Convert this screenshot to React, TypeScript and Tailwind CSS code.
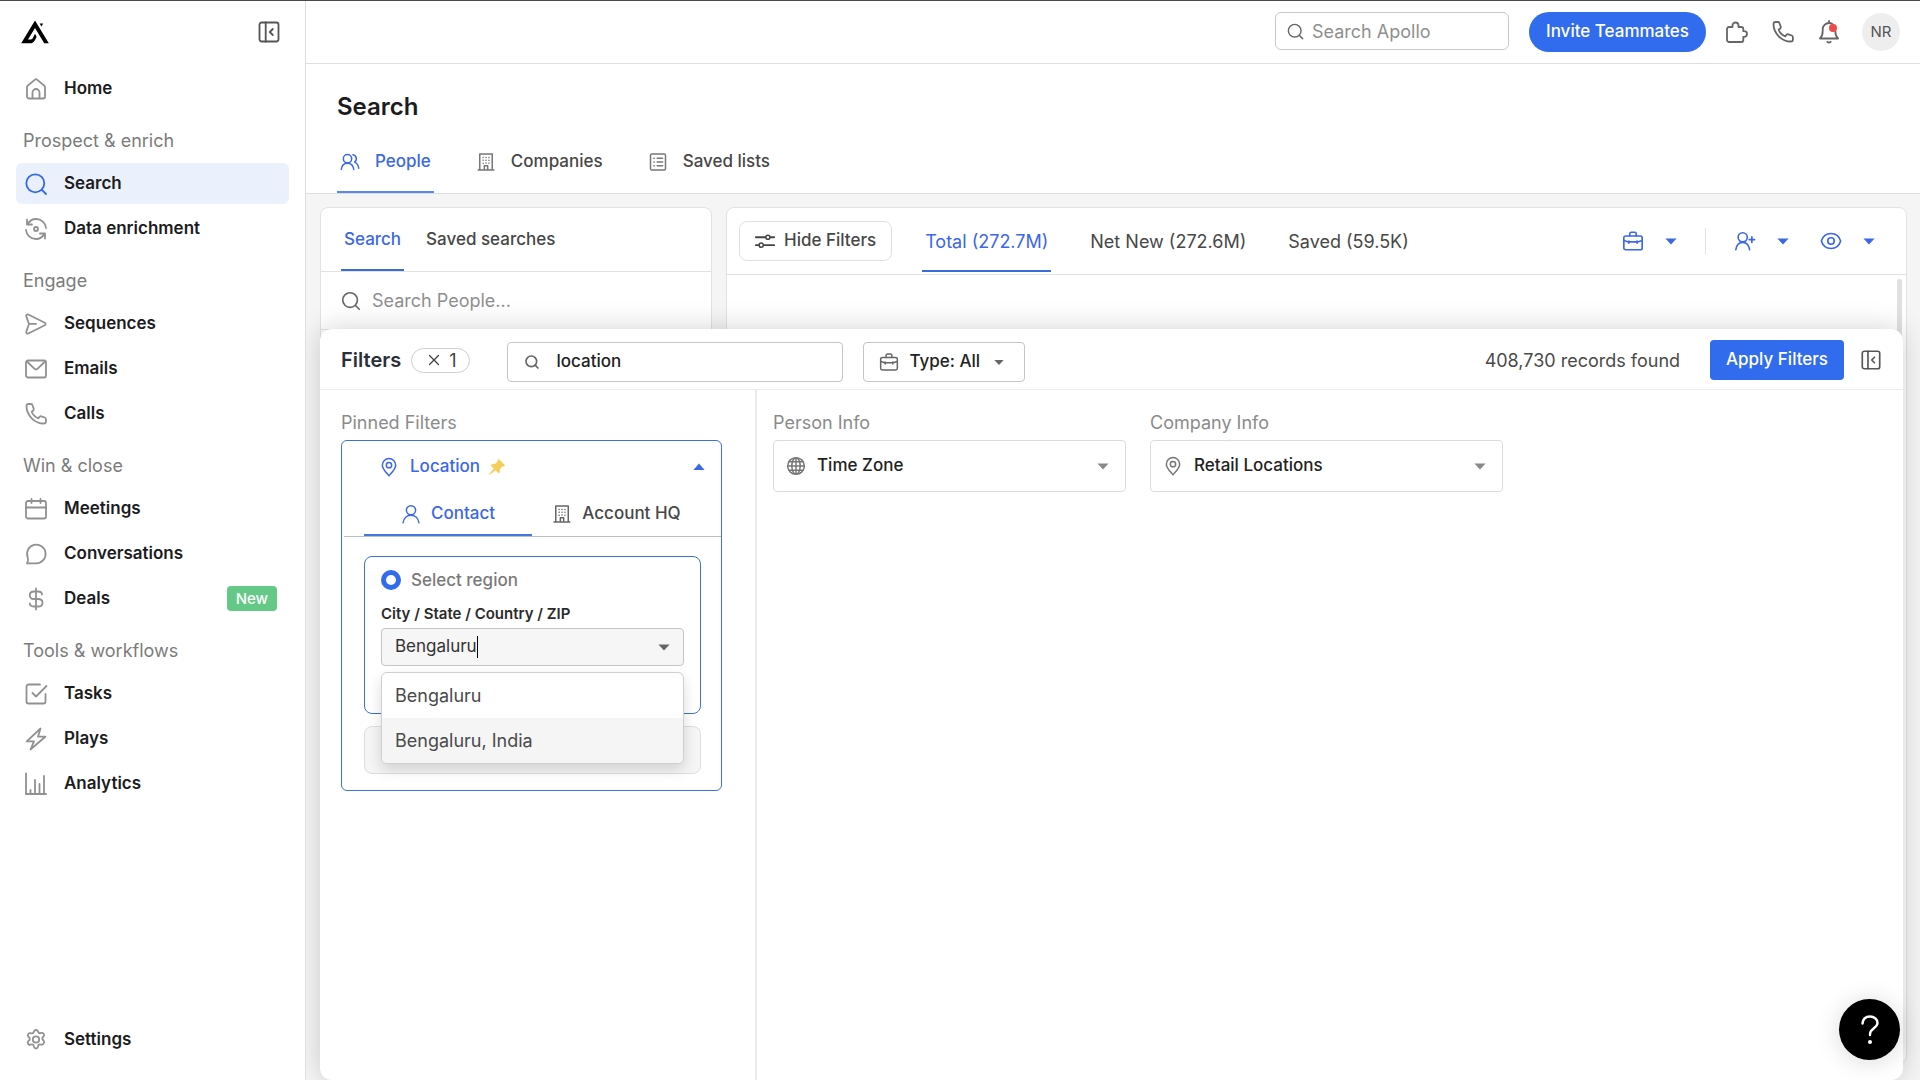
import React, { useState } from 'react';
import { Search as SearchIcon, X } from 'lucide-react';

interface IconProps {
  className?: string;
  children: React.ReactNode;
}

const Icon: React.FC<IconProps> = ({ className = 'w-6 h-6', children }) => (
  <svg
    viewBox="0 0 24 24"
    fill="none"
    stroke="currentColor"
    strokeWidth="1.8"
    strokeLinecap="round"
    strokeLinejoin="round"
    aria-hidden="true"
    className={`shrink-0 ${className}`}
  >
    {children}
  </svg>
);

const Logo = () => (
  <svg viewBox="0 0 28 24" className="w-7 h-6" fill="#000" aria-hidden="true">
    <path d="M14 0.5 27.8 23.3h-4.6L14 8 7 19.6h1.6c1.6 0 2.6-.5 3.4-1.9l2-4 1.6 3-1.4 3c-1.2 2.5-2.8 3.6-5.6 3.6H0.2z" />
    <path d="M18.6 3.4h3.6l-1.8 3z" />
  </svg>
);

const PanelIcon = ({ className }: { className?: string }) => (
  <Icon className={className}>
    <rect x="2.5" y="2.5" width="19" height="19" rx="2.2" />
    <path d="M8.7 2.5v19M15.8 9l-3 3 3 3" />
  </Icon>
);

const phonePath = (
  <path d="M2.5 4.1C2.5 3 3.4 2 4.6 2h2.2c.8 0 1.5.5 1.7 1.2l1.2 3.4c.2.7 0 1.400-.5 1.900L7.700 9.800c1 2.700 3.700 5.400 6.500 6.500l1.300-1.500c.5-.5 1.200-.7 1.900-.5l3.300 1.200c.7.3 1.200 1 1.200 1.700v2.200c0 1.200-1 2.100-2.100 2.100C10.600 21.500 2.500 13.400 2.500 4.100z" />
);

const BuildingIcon = ({ className }: { className?: string }) => (
  <Icon className={className}>
    <path d="M4.5 21.500v-19h15v19M2.500 21.500h19M10 21.500v-5h4v5" />
    <path d="M8.500 6.500h.1M12 6.500h.1M15.500 6.500h.1M8.500 10h.1M12 10h.1M15.500 10h.1M8.500 13.500h.1M12 13.300h.1M15.500 13.500h.1" />
  </Icon>
);

const BriefcaseIcon = ({ className }: { className?: string }) => (
  <Icon className={className}>
    <rect x="2" y="6.500" width="20" height="15" rx="2" />
    <path d="M8.500 6.500V4.200c0-.9.7-1.700 1.700-1.700h3.600c1 0 1.700.8 1.700 1.700v2.300M2 11.500l5 1.500h10l5-1.500M7.500 12v2.500M16.500 12v2.500" />
  </Icon>
);

const PinIcon = ({ className }: { className?: string }) => (
  <Icon className={className}>
    <path d="M12 22.500c-4-4.700-8-8.300-8-12.700a8 8 0 0 1 16 0c0 4.400-4 8-8 12.700z" />
    <circle cx="12" cy="9.800" r="3.200" />
  </Icon>
);

const Caret = ({ up = false, className = '' }: { up?: boolean; className?: string }) => (
  <svg viewBox="0 0 12 8" className={`w-3 h-2 shrink-0 ${className}`} fill="currentColor" aria-hidden="true">
    {up ? <path d="M6 .5 11.600 7H.4z" /> : <path d="M6 7.500.400 1.500h11.200z" />}
  </svg>
);

interface NavEntry {
  name: string;
  icon: React.ReactNode;
  active?: boolean;
  badge?: string;
}

const sections: { title: string; items: NavEntry[] }[] = [
  {
    title: '',
    items: [
      { name: 'Home', icon: <path d="M3 10.200c0-.7.300-1.300.9-1.700L11 2.600c.6-.5 1.400-.5 2 0l7.100 5.900c.6.400.9 1 .9 1.700v9.300c0 1.100-.9 2-2 2H5c-1.100 0-2-.9-2-2zM8.500 21.500v-6c0-1.900 1.600-3.500 3.500-3.500s3.500 1.600 3.500 3.500v6" /> },
    ],
  },
  {
    title: 'Prospect & enrich',
    items: [
      { name: 'Search', active: true, icon: <path d="M11.300 20.300a9 9 0 1 0 0-18 9 9 0 0 0 0 18zM17.700 17.700l4.300 4.300" /> },
      { name: 'Data enrichment', icon: <><path d="M3 2.500v5h5M3.500 7.300C5.300 4 8.300 2 12 2c5.500 0 9.500 4 10 9M21 21.500v-5h-5M20.500 16.700C18.700 20 15.700 22 12 22 6.500 22 2.500 18 2 13" /><circle cx="12" cy="12" r="2" /></> },
    ],
  },
  {
    title: 'Engage',
    items: [
      { name: 'Sequences', icon: <path d="M5 11.900h7M5 12 2.300 4.400c-.5-1.300.8-2.500 2-1.900l16.500 8.200c1.100.5 1.100 2.100 0 2.600L4.300 21.500c-1.200.6-2.500-.6-2-1.900z" /> },
      { name: 'Emails', icon: <><rect x="2" y="3.500" width="20" height="17" rx="2" /><path d="m3 4.500 7.300 7.200c1 .9 2.400.9 3.400 0L21 4.500" /></> },
      { name: 'Calls', icon: phonePath },
    ],
  },
  {
    title: 'Win & close',
    items: [
      { name: 'Meetings', icon: <><rect x="2" y="4" width="20" height="17.500" rx="2" /><path d="M2 10.500h20M7.500 2v4M16.500 2v4" /></> },
      { name: 'Conversations', icon: <path d="M3 21.300h9.300A9.300 9.300 0 1 0 3.600 15.300c.5 1.500.6 2.500.3 3.700z" /> },
      { name: 'Deals', badge: 'New', icon: <path d="M12 1.500v21M18 7.500C18 5.500 16.500 4.500 14 4.500h-4C7.500 4.500 5.800 6 5.800 8.200S7.500 12 10 12h4c2.500 0 4.500 1.300 4.500 3.700s-2 3.800-4.500 3.800h-4c-2.500 0-4.200-1.300-4.200-3.200" /> },
    ],
  },
  {
    title: 'Tools & workflows',
    items: [
      { name: 'Tasks', icon: <path d="M16 2.500H4.500c-1.100 0-2 .9-2 2v15c0 1.100.9 2 2 2h15c1.100 0 2-.9 2-2V12M8.500 11l3.500 3.500L22.500 4" /> },
      { name: 'Plays', icon: <path d="M16.500 1.500 2.700 14.300h7.300L6.500 22.500 21.300 9.700H14z" /> },
      { name: 'Analytics', icon: <path d="M2 1.500V22h20M6.500 22v-4M11 22V8M15.500 22V12M20 22V4" /> },
    ],
  },
];

const NavItem = ({ name, icon, active, badge }: NavEntry) => (
  <a
    href="#"
    className={`flex items-center gap-4 h-[41px] pl-2 pr-3 rounded-md text-[17px] font-semibold text-[#1c1c1e] ${active ? 'bg-[#ebf0fd]' : ''}`}
  >
    <Icon className={active ? 'w-6 h-6 text-[#3069f0]' : 'w-6 h-6 text-[#919191]'}>{icon}</Icon>
    <span>{name}</span>
    {badge && <span className="ml-auto bg-[#64c987] text-white text-[15px] leading-[25px] font-medium px-[9px] rounded-sm">{badge}</span>}
  </a>
);

const Sidebar = () => (
  <aside className="w-[306px] shrink-0 flex flex-col border-r border-[#dedede] bg-white">
    <div className="flex items-center justify-between h-[62px] pl-[21px] pr-6">
      <Logo />
      <button aria-label="Collapse sidebar" className="text-[#555]">
        <PanelIcon className="w-6 h-6" />
      </button>
    </div>
    <nav className="flex-1 flex flex-col px-4 pt-[5px] pb-5">
      {sections.map((section) => (
        <div key={section.title} className="pb-5">
          {section.title && <h2 className="pl-[7px] pb-[10px] text-[18px] leading-6 text-[#7c7c7c]">{section.title}</h2>}
          <div className="flex flex-col gap-1">
            {section.items.map((item) => (
              <NavItem key={item.name} {...item} />
            ))}
          </div>
        </div>
      ))}
      <div className="mt-auto">
        <NavItem
          name="Settings"
          icon={<><path d="M10 3.500c.3-1 .9-1.500 2-1.500s1.700.5 2 1.500c.3 1.200 1.500 1.900 2.700 1.600l.9-.2c1-.2 1.700.1 2.200 1 .6 1 .5 1.800-.2 2.500l-.6.6c-.9.9-.9 2.200 0 3l.6.6c.7.7.8 1.500.2 2.500l-.3.5c-.5.9-1.200 1.200-2.200 1l-.6-.1c-1.200-.3-2.400.4-2.700 1.600l-.2.9c-.3 1-.8 1.500-1.800 1.500s-1.700-.5-2-1.500l-.2-.9c-.3-1.200-1.500-1.900-2.700-1.600l-.8.2c-1 .2-1.700-.1-2.200-1-.6-1-.5-1.800.2-2.500l.8-.8c.9-.8.9-2.100 0-3l-.8-.8c-.7-.7-.8-1.500-.2-2.500.5-.9 1.200-1.200 2.200-1l.9.2c1.200.3 2.400-.4 2.700-1.600z" /><circle cx="12" cy="11.500" r="3.200" /></>}
        />
      </div>
    </nav>
  </aside>
);

const TopBar = () => (
  <header className="flex items-center justify-end h-[63px] pr-5 border-b border-[#dedede] bg-white text-[#666]">
    <label className="flex items-center gap-[7px] w-[234px] h-[38px] mb-[2px] pl-[10px] border border-[#c9c9c9] rounded-md">
      <SearchIcon className="w-[19px] h-[19px] shrink-0" strokeWidth={1.8} />
      <input
        type="search"
        aria-label="Search Apollo"
        placeholder="Search Apollo"
        className="w-full min-w-0 bg-transparent text-[18px] placeholder:text-[#8f8f8f] focus:outline-none"
      />
    </label>
    <button className="ml-5 h-10 px-[17px] rounded-full bg-[#316bee] text-white text-[17px] font-medium">Invite Teammates</button>
    <button aria-label="Extensions" className="ml-[19px]">
      <Icon className="w-6 h-6">
        <path d="M2 9c0-1 .9-2 2-2h3.500V5.500a3 3 0 0 1 6 0V7h2.800c1.100 0 2 .9 2 2v2.200h.9a2.800 2.800 0 0 1 0 5.600h-.9V20c0 1.100-.9 2-2 2H4c-1.100 0-2-.9-2-2z" />
      </Icon>
    </button>
    <button aria-label="Dialer" className="ml-[22px]">
      <Icon className="w-6 h-6">{phonePath}</Icon>
    </button>
    <button aria-label="Notifications" className="relative ml-[22px]">
      <Icon className="w-6 h-6">
        <path d="M3 18.500c1.700-1.700 2.700-4 2.700-7.200v-2a6.300 6.300 0 0 1 12.600 0v2c0 3.200 1 5.500 2.700 7.200zM10.300 21.800c1 .9 2.400.9 3.400 0M12 1v2" />
      </Icon>
      <span className="absolute top-1 right-1 w-2 h-2 rounded-full bg-[#f04b4b]" />
    </button>
    <button className="ml-[21px] w-[38px] h-[38px] rounded-full bg-[#eeeeee] text-[#555] text-[15px]">NR</button>
  </header>
);

const pageTabs = [
  {
    name: 'People',
    icon: (
      <Icon className="w-5 h-5">
        <circle cx="9" cy="8" r="5" />
        <path d="M1.500 21c.5-4.500 3.500-7.500 7.500-7.500s7 3 7.500 7.500M15.500 3.200a5 5 0 0 1 2 9c2.700 1.200 4.500 3.800 5 7.300" />
      </Icon>
    ),
  },
  { name: 'Companies', icon: <BuildingIcon className="w-5 h-5 text-[#777]" /> },
  {
    name: 'Saved lists',
    icon: (
      <Icon className="w-5 h-5 text-[#777]">
        <rect x="3" y="2.500" width="18" height="19" rx="1.500" />
        <path d="M7 7.500h.5M11 7.500h6.500M7 12h.5M11 12h6.500M7 16.500h.5M11 16.500h6.500" />
      </Icon>
    ),
  },
];

const PageHeader = () => (
  <div className="bg-white border-b border-[#dedede] px-[31px] pt-[27px]">
    <h1 className="text-2xl leading-8 font-semibold text-[#1c1c1e]">Search</h1>
    <div role="tablist" className="flex gap-[39px] mt-4">
      {pageTabs.map((tab, i) => (
        <button
          key={tab.name}
          role="tab"
          aria-selected={i === 0}
          className={`flex items-center gap-[15px] px-[3px] h-[54px] pb-[7px] text-[17px] font-medium border-b-2 ${
            i === 0 ? 'border-[#5b86ea] text-[#3b67e8]' : 'border-transparent text-[#474747]'
          }`}
        >
          {tab.icon}
          {tab.name}
        </button>
      ))}
    </div>
  </div>
);

const LeftPanel = () => (
  <section className="w-[392px] shrink-0 border border-[#e2e2e2] rounded-t-lg bg-white">
    <div role="tablist" className="flex items-end gap-[13px] pl-[20px] border-b border-[#e2e2e2]">
      <button role="tab" aria-selected="true" className="h-[63px] pt-[2px] px-[3px] text-[17px] font-medium text-[#3b67e8] border-b-2 border-[#3c6bdc]">Search</button>
      <button role="tab" aria-selected="false" className="h-[63px] pt-[2px] px-[9px] text-[17px] font-medium text-[#474747] border-b-2 border-transparent">Saved searches</button>
    </div>
    <label className="flex items-center gap-[10px] h-[58px] pl-[19px] border-b border-[#e2e2e2] text-[#666]">
      <SearchIcon className="w-[22px] h-[22px] shrink-0" strokeWidth={1.8} />
      <input
        type="search"
        aria-label="Search People"
        placeholder="Search People..."
        className="w-full min-w-0 text-[18px] placeholder:text-[#8f8f8f] focus:outline-none"
      />
    </label>
  </section>
);

const counts = ['Total (272.7M)', 'Net New (272.6M)', 'Saved (59.5K)'];

const RightPanel = () => (
  <section className="flex-1 min-w-0 border border-[#e2e2e2] rounded-lg bg-white">
    <div className="flex items-center h-[67px] pl-3 pr-[31px] border-b border-[#e2e2e2]">
      <button className="flex items-center gap-[9px] h-10 px-[15px] border border-[#e0e0e0] rounded-lg text-[17px] font-medium text-[#474747]">
        <Icon className="w-5 h-5 text-[#444]">
          <path d="M1 7.500h11M19 7.500h4M1 17h3.500M11 17h12" strokeWidth="2.200" />
          <circle cx="15.500" cy="7.500" r="2.500" />
          <circle cx="7.500" cy="17" r="2.500" />
        </Icon>
        Hide Filters
      </button>
      <div role="tablist" className="flex gap-9 ml-[30px]">
        {counts.map((name, i) => (
          <button
            key={name}
            role="tab"
            aria-selected={i === 0}
            className={`h-[62px] pt-[3px] px-[3px] text-[18px] font-normal border-b-2 ${
              i === 0 ? 'border-[#3c6bdc] text-[#3b67e8]' : 'border-transparent text-[#474747]'
            }`}
          >
            {name}
          </button>
        ))}
      </div>
      <div className="flex items-center ml-auto text-[#3b67e8]">
        <button aria-label="Jobs"><BriefcaseIcon className="w-[22px] h-[22px]" /></button>
        <button aria-label="Job options" className="ml-[21px]"><Caret /></button>
        <span className="w-px h-[26px] mx-7 bg-[#e0e0e0]" />
        <button aria-label="Add people">
          <Icon className="w-[22px] h-[22px]">
            <circle cx="9.500" cy="8" r="5" />
            <path d="M2 21.500c.5-4.800 3.500-8 7.500-8s7 3.200 7.500 8M19.500 7.500v6M16.500 10.500h6" />
          </Icon>
        </button>
        <button aria-label="Add options" className="ml-[21px]"><Caret /></button>
        <button aria-label="View" className="ml-[31px]">
          <Icon className="w-[22px] h-[22px]">
            <path d="M1.500 12C3 7 7 3.800 12 3.800S21 7 22.500 12C21 17 17 20.200 12 20.200S3 17 1.500 12z" />
            <circle cx="12" cy="12" r="3.500" />
          </Icon>
        </button>
        <button aria-label="View options" className="ml-[21px]"><Caret /></button>
      </div>
    </div>
    <div className="ml-auto mr-1 mt-1 w-[5px] h-40 rounded-full bg-[#e0e0e0]" />
  </section>
);

const places = ['Bengaluru', 'Bengaluru, India'];

const LocationFilter = () => {
  const [city, setCity] = useState('Bengaluru');

  return (
    <div className="border border-[#3c6fe0] rounded-md pb-3 text-[17px]">
      <button aria-expanded="true" className="flex items-center w-full h-[52px] pl-[37px] pr-4 font-medium text-[#3b67e8]">
        <PinIcon className="w-5 h-5" />
        <span className="ml-[11px]">Location</span>
        <svg viewBox="0 0 18 18" className="w-[18px] h-[18px] ml-2 text-[#f5cf5b]" fill="currentColor" aria-hidden="true">
          <path d="M10.800 1 17 7.200l-1 1.300-1.200-.3-3 3.100c.4 1.700.1 3-.9 4.200L7.500 12.200 1.800 16.700l-.6-.6 4.600-5.600L2.500 7.200c1.200-1.100 2.600-1.400 4.200-1l3-3-.3-1.200z" />
        </svg>
        <Caret up className="ml-auto" />
      </button>
      <div role="tablist" className="flex ml-[2px] pl-5 border-b border-[#b9bfc9]">
        <button role="tab" aria-selected="true" className="flex items-center justify-center gap-[10px] w-[168px] h-[43px] font-medium text-[#3b67e8] border-b-2 border-[#4377e0]">
          <Icon className="w-5 h-5">
            <circle cx="12" cy="7.500" r="5.500" />
            <path d="M2.500 22.500c.7-5.500 4.500-9 9.500-9s8.800 3.500 9.500 9" />
          </Icon>
          Contact
        </button>
        <button role="tab" aria-selected="false" className="flex items-center justify-center gap-[10px] flex-1 h-[43px] pr-5 font-medium text-[#474747] border-b-2 border-transparent">
          <BuildingIcon className="w-5 h-5 text-[#666]" />
          Account HQ
        </button>
      </div>
      <div className="pl-[22px] pr-5 pt-[19px]">
        <div className="h-[158px] border border-[#3c6fe0] rounded-lg px-4 pt-[11px]">
          <label className="flex items-center gap-[10px] text-[17px] leading-6 font-medium text-[#7a7a7a]">
            <input type="radio" name="region" defaultChecked className="appearance-none w-5 h-5 rounded-full border-[5px] border-[#316bee]" />
            Select region
          </label>
          <label htmlFor="city" className="block mt-3 mb-1 text-[15px] leading-5 font-semibold text-[#2b2b2b]">City / State / Country / ZIP</label>
          <div className="relative">
            <div className="flex items-center h-[38px] border border-[#c5c5c5] rounded-sm bg-[#f6f6f6] px-[13px] text-[#666]">
              <input
                id="city"
                type="text"
                role="combobox"
                aria-expanded="true"
                aria-controls="city-options"
                value={city}
                onChange={(e) => setCity(e.target.value)}
                className="flex-1 min-w-0 bg-transparent text-[#333] focus:outline-none"
              />
              <span className="absolute left-24 top-2 w-px h-[22px] bg-black" />
              <Caret />
            </div>
            <ul id="city-options" role="listbox" className="absolute top-11 inset-x-0 border border-[#cfcfcf] rounded-md bg-white overflow-hidden shadow-[0_6px_14px_rgba(0,0,0,0.14)]">
              {places.map((place, i) => (
                <li
                  key={place}
                  role="option"
                  aria-selected={i === 1}
                  onClick={() => setCity(place)}
                  className={`flex items-center h-[45px] pl-[13px] text-[18px] text-[#4a4a4a] ${i === 1 ? 'bg-[#f5f5f5]' : ''}`}
                >
                  {place}
                </li>
              ))}
            </ul>
          </div>
        </div>
        <div className="h-12 mt-3 mb-1 border border-[#dedede] rounded-lg bg-[#f5f5f5]" />
      </div>
    </div>
  );
};

const FilterCard = ({ group, name, icon }: { group: string; name: string; icon: React.ReactNode }) => (
  <div className="w-[353px]">
    <h3 className="text-[18px] leading-6 text-[#8b8b8b]">{group}</h3>
    <button className="flex items-center w-full h-[52px] mt-[5px] pl-3 pr-4 border border-[#dcdcdc] rounded-sm text-[17px] font-medium text-[#222]">
      {icon}
      <span className="ml-[11px]">{name}</span>
      <Caret className="ml-auto text-[#888]" />
    </button>
  </div>
);

const FiltersDrawer = () => (
  <section className="z-10 [grid-area:1/1] flex flex-col mt-[122px] mr-1 rounded-xl bg-white shadow-[0_0_28px_rgba(0,0,0,0.18)]">
    <div className="flex items-center h-[61px] pt-[2px] px-[21px] border-b border-[#ececec]">
      <h2 className="text-xl font-semibold text-[#2a2f3a]">Filters</h2>
      <button aria-label="Clear 1 filter" className="flex items-center gap-[6px] ml-[10px] h-[25px] px-[13px] border border-[#cfcfcf] rounded-full text-[18px] text-[#444]">
        <X className="w-[18px] h-[18px]" strokeWidth={1.8} />
        1
      </button>
      <label className="flex items-center gap-4 w-[336px] h-10 mt-1 ml-[37px] pl-4 border border-[#c5c5c5] rounded-sm text-[#666]">
        <SearchIcon className="w-4 h-4 shrink-0" strokeWidth={2.5} />
        <input type="text" aria-label="Search filters" defaultValue="location" className="w-full min-w-0 text-[17px] font-medium text-[#222] focus:outline-none" />
      </label>
      <div className="flex items-center h-10 mt-1 ml-5 pl-[15px] pr-5 border border-[#c5c5c5] rounded-sm text-[#666]">
        <BriefcaseIcon className="w-5 h-5" />
        <select aria-label="Filter type" className="appearance-none ml-[10px] pr-[14px] bg-transparent text-[17px] font-medium text-[#222] focus:outline-none">
          <option>Type: All</option>
        </select>
        <Caret className="w-[10px]" />
      </div>
      <p className="ml-auto text-[18px] text-[#4a4a4a]">408,730 records found</p>
      <button className="ml-[30px] h-10 px-4 rounded-sm bg-[#316bee] text-white text-[17px] font-medium">Apply Filters</button>
      <button aria-label="Collapse filters" className="ml-4 text-[#555]">
        <PanelIcon className="w-[22px] h-[22px]" />
      </button>
    </div>
    <div className="flex flex-1">
      <div className="w-[437px] shrink-0 pl-[21px] pr-[33px] pt-[21px] border-r-2 border-[#ebebeb]">
        <h3 className="mb-[5px] text-[18px] leading-6 text-[#8b8b8b]">Pinned Filters</h3>
        <LocationFilter />
      </div>
      <div className="flex flex-wrap content-start gap-6 pl-4 pt-[21px]">
        <FilterCard
          group="Person Info"
          name="Time Zone"
          icon={
            <Icon className="w-5 h-5 text-[#777]">
              <circle cx="12" cy="12" r="10" />
              <ellipse cx="12" cy="12" rx="5" ry="10" />
              <path d="M12 2v20M2 12h20M3.500 7h17M3.500 17h17" />
            </Icon>
          }
        />
        <FilterCard group="Company Info" name="Retail Locations" icon={<PinIcon className="w-5 h-5 text-[#777]" />} />
      </div>
    </div>
  </section>
);

export default function App() {
  return (
    <div className="flex min-h-screen border-t border-[#4a4a4a] bg-white font-['Inter',sans-serif]">
      <Sidebar />
      <main className="flex-1 min-w-0 flex flex-col">
        <TopBar />
        <PageHeader />
        <div className="flex-1 grid pl-[14px] pr-[13px] pt-[13px] bg-[#f5f5f6] overflow-hidden">
          <div className="[grid-area:1/1] flex gap-[14px] pb-4">
            <LeftPanel />
            <RightPanel />
          </div>
          <FiltersDrawer />
        </div>
      </main>
      <button
        aria-label="Help"
        className="fixed z-20 right-5 bottom-5 flex items-center justify-center w-[61px] h-[61px] rounded-full bg-black text-white shadow-[0_2px_24px_rgba(0,0,0,0.15)]"
      >
        <svg viewBox="0 0 18 30" className="w-[18px] h-[30px]" fill="none" stroke="currentColor" strokeWidth="2.4" strokeLinecap="round" aria-hidden="true">
          <path d="M1.500 8.500C2 4 5 1.500 9 1.500s7.500 2.600 7.500 6.500c0 5-7.500 5.500-7.500 11v1" />
          <circle cx="9" cy="27" r="2" fill="currentColor" stroke="none" />
        </svg>
      </button>
    </div>
  );
}
